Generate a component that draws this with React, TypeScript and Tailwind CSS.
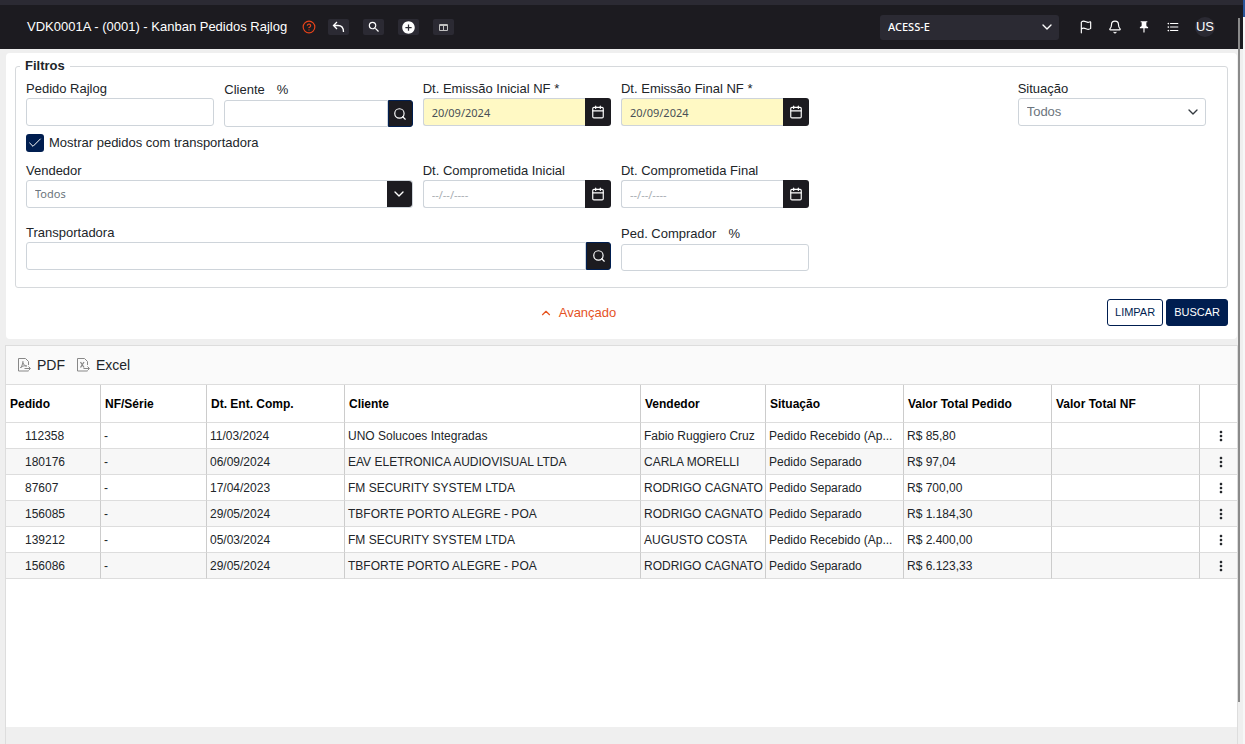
import type { ReactNode } from "react";
import { Bell, Calendar, Check, ChevronDown, ChevronUp, CircleHelp, Flag, Search } from "lucide-react";
import { MdAddCircle, MdFormatListBulleted, MdMoreVert, MdPushPin, MdSearch } from "react-icons/md";

const orders = [
  { pedido: "112358", nf: "-", data: "11/03/2024", cliente: "UNO Solucoes Integradas", vendedor: "Fabio Ruggiero Cruz", situacao: "Pedido Recebido (Ap...", total: "R$ 85,80" },
  { pedido: "180176", nf: "-", data: "06/09/2024", cliente: "EAV ELETRONICA AUDIOVISUAL LTDA", vendedor: "CARLA MORELLI", situacao: "Pedido Separado", total: "R$ 97,04" },
  { pedido: "87607", nf: "-", data: "17/04/2023", cliente: "FM SECURITY SYSTEM LTDA", vendedor: "RODRIGO CAGNATO", situacao: "Pedido Separado", total: "R$ 700,00" },
  { pedido: "156085", nf: "-", data: "29/05/2024", cliente: "TBFORTE PORTO ALEGRE - POA", vendedor: "RODRIGO CAGNATO", situacao: "Pedido Separado", total: "R$ 1.184,30" },
  { pedido: "139212", nf: "-", data: "05/03/2024", cliente: "FM SECURITY SYSTEM LTDA", vendedor: "AUGUSTO COSTA", situacao: "Pedido Recebido (Ap...", total: "R$ 2.400,00" },
  { pedido: "156086", nf: "-", data: "29/05/2024", cliente: "TBFORTE PORTO ALEGRE - POA", vendedor: "RODRIGO CAGNATO", situacao: "Pedido Separado", total: "R$ 6.123,33" },
];

const columns = ["Pedido", "NF/Série", "Dt. Ent. Comp.", "Cliente", "Vendedor", "Situação", "Valor Total Pedido", "Valor Total NF"];

const inputClass = "w-full min-w-0 flex-1 border border-[#ced4da] bg-white px-2 text-xs text-[#495057] outline-none";

function Field({ id, label, percent, className, children }: { id: string; label: string; percent?: boolean; className?: string; children: ReactNode }) {
  return (
    <div className={className}>
      <label htmlFor={id} className={percent ? "flex h-5 items-center gap-3" : "flex h-[18px] items-center"}>
        {label}
        {percent && <span>%</span>}
      </label>
      {children}
    </div>
  );
}

function DateField({ id, label, value }: { id: string; label: string; value?: string }) {
  return (
    <Field id={id} label={label}>
      <div className="flex">
        <input
          id={id}
          defaultValue={value}
          placeholder="--/--/----"
          className={
            value
              ? "h-7 w-full min-w-0 flex-1 rounded-l-[3px] border border-r-0 border-[#ced4da] bg-[#fff9c4] px-2 font-['Noto_Sans',sans-serif] text-[11px] text-[#495057] outline-none"
              : "h-7 w-full min-w-0 flex-1 rounded-l-[3px] border border-r-0 border-[#ced4da] bg-white px-2 font-['Noto_Sans',sans-serif] text-[11px] text-[#495057] outline-none placeholder:text-[#a9aeb3]"
          }
        />
        <button aria-label="Abrir calendário" className="flex h-7 w-[26px] items-center justify-center rounded-r-[3px] bg-[#1c1b20] text-white">
          <Calendar size={14} strokeWidth={2} />
        </button>
      </div>
    </Field>
  );
}

function SearchField({ id, label, percent, className }: { id: string; label: string; percent?: boolean; className?: string }) {
  const height = percent ? "h-[27px]" : "h-7";
  return (
    <Field id={id} label={label} percent={percent} className={className}>
      <div className={`flex ${height}`}>
        <input id={id} className={`${inputClass} rounded-l-[3px]`} />
        <button aria-label="Pesquisar" className="flex w-[25px] items-center justify-center rounded-r-[3px] border border-[#001e50] bg-[#1c1b20] text-white">
          <Search size={14} strokeWidth={2} />
        </button>
      </div>
    </Field>
  );
}

function ToolButton({ label, children }: { label: string; children: ReactNode }) {
  return (
    <button aria-label={label} className="flex h-4 w-[21px] items-center justify-center rounded-[2px] bg-[#2b2a33] text-white">
      {children}
    </button>
  );
}

function FileIcon({ children }: { children: ReactNode }) {
  return (
    <svg width="14" height="14" viewBox="0 0 14 14" fill="none" stroke="#888" strokeWidth="1">
      <path d="M10.5 7V3.5L7.500.5H.5v12.5H10.5M6.500 10.5h5.500M10.500 8.500l2 2-2 2" />
      {children}
    </svg>
  );
}

function Header() {
  return (
    <header className="flex h-[49px] items-center border-t-[5px] border-[#2b2a33] bg-[#1c1b20] pr-7 pl-[27px] text-white">
      <h1 className="text-[13px]">VDK0001A - (0001) - Kanban Pedidos Rajlog</h1>
      <button aria-label="Ajuda" className="ml-[15px] text-[#e5431a]">
        <CircleHelp size={14} strokeWidth={2} />
      </button>
      <div className="ml-3 flex gap-[14px]">
        <ToolButton label="Voltar">
          <svg width="13" height="12" viewBox="0 0 13 12" fill="none" stroke="currentColor" strokeWidth="1.3">
            <path d="M5 1 1.500 4.500 5 8M1.500 4.500H6c3.500 0 5.500 2.500 5.500 6.500" />
          </svg>
        </ToolButton>
        <ToolButton label="Pesquisar">
          <MdSearch size={14} />
        </ToolButton>
        <ToolButton label="Adicionar">
          <MdAddCircle size={15} />
        </ToolButton>
        <ToolButton label="Colunas">
          <svg width="9" height="7" viewBox="0 0 9 7" fill="none" stroke="#c0c0c0" strokeWidth="1">
            <path d="M.5.5h8v6h-8zM.5 1.500h8M4.500 1v5.500" />
          </svg>
        </ToolButton>
      </div>
      <div className="relative ml-auto w-[179px]">
        <select aria-label="Empresa" className="h-[25px] w-full appearance-none rounded-[3px] bg-[#2b2a33] px-2 font-['Noto_Sans',sans-serif] text-[11px] font-medium outline-none">
          <option>ACESS-E</option>
        </select>
        <ChevronDown size={16} className="pointer-events-none absolute top-1 right-1" />
      </div>
      <div className="ml-5 flex items-center gap-[15px]">
        <button aria-label="Marcadores"><Flag size={14} strokeWidth={2} /></button>
        <button aria-label="Notificações"><Bell size={14} strokeWidth={2} /></button>
        <button aria-label="Fixar"><MdPushPin size={14} /></button>
        <button aria-label="Lista"><MdFormatListBulleted size={14} /></button>
        <button className="flex size-5 items-center justify-center rounded-full bg-[#2b2a33] text-[13px]">US</button>
      </div>
    </header>
  );
}

function Filters() {
  return (
    <section className="mx-[6px] mt-1 rounded-[4px] bg-white px-[9px] pt-[3px] pb-[13px]">
      <fieldset className="rounded-[3px] border border-[#d6d9dc]">
        <legend className="ml-1 px-[5px] text-[13px] leading-5 font-bold">Filtros</legend>
        <div className="pt-1 pr-[21px] pb-4 pl-[10px]">
          <div className="grid grid-cols-6 gap-x-[10px]">
            <Field id="pedido" label="Pedido Rajlog">
              <input id="pedido" className={`${inputClass} block h-7 rounded-[3px]`} />
            </Field>
            <SearchField id="cliente" label="Cliente" percent />
            <DateField id="emissao-inicial" label="Dt. Emissão Inicial NF *" value="20/09/2024" />
            <DateField id="emissao-final" label="Dt. Emissão Final NF *" value="20/09/2024" />
            <Field id="situacao" label="Situação" className="col-start-6">
              <div className="relative">
                <select id="situacao" className="h-7 w-full appearance-none rounded-[3px] border border-[#ced4da] bg-white px-2 text-[13px] text-[#6c757d] outline-none">
                  <option>Todos</option>
                </select>
                <ChevronDown size={16} className="pointer-events-none absolute top-[6px] right-[5px] text-[#343a40]" />
              </div>
            </Field>
          </div>
          <div className="mt-[7px] flex items-center gap-[5px] leading-[18px]">
            <div className="relative size-[18px]">
              <input id="transp" type="checkbox" defaultChecked className="block size-[18px] appearance-none rounded-[3px] bg-[#001e50]" />
              <Check size={16} strokeWidth={1.5} className="pointer-events-none absolute top-px left-px text-white" />
            </div>
            <label htmlFor="transp">Mostrar pedidos com transportadora</label>
          </div>
          <div className="mt-[10px] grid grid-cols-6 gap-x-[10px]">
            <Field id="vendedor" label="Vendedor" className="col-span-2">
              <div className="relative">
                <select id="vendedor" className="h-7 w-full appearance-none rounded-[3px] border border-[#ced4da] bg-white px-2 font-['Noto_Sans',sans-serif] text-[11px] text-[#6c757d] outline-none">
                  <option>Todos</option>
                </select>
                <span className="pointer-events-none absolute top-px right-px flex h-[26px] w-[25px] items-center justify-center rounded-r-[3px] bg-[#1c1b20] text-white">
                  <ChevronDown size={16} />
                </span>
              </div>
            </Field>
            <DateField id="comp-inicial" label="Dt. Comprometida Inicial" />
            <DateField id="comp-final" label="Dt. Comprometida Final" />
          </div>
          <div className="mt-4 grid grid-cols-6 gap-x-[10px]">
            <SearchField id="transportadora" label="Transportadora" className="col-span-3" />
            <Field id="comprador" label="Ped. Comprador" percent>
              <input id="comprador" className={`${inputClass} block h-[27px] rounded-[3px]`} />
            </Field>
          </div>
        </div>
      </fieldset>
      <div className="mt-[11px] flex items-center gap-[3px]">
        <div className="flex flex-1 justify-center pl-9">
          <button className="flex items-center gap-[6px] text-[13px] text-[#e5531f]">
            <ChevronUp size={14} strokeWidth={2} />
            Avançado
          </button>
        </div>
        <button className="h-[27px] rounded-[3px] border border-[#001e50] px-[7px] text-[11px] text-[#001e50]">LIMPAR</button>
        <button className="h-[27px] rounded-[3px] border border-[#001e50] bg-[#001e50] px-[7px] text-[11px] text-white">BUSCAR</button>
      </div>
    </section>
  );
}

function OrdersTable() {
  return (
    <section className="mx-[5px] mt-[6px] flex flex-1 flex-col border-x border-t border-[#ddd] bg-white">
      <div className="flex h-[38px] items-center gap-3 bg-[#fafafa] pl-3 text-sm">
        <button className="flex items-center gap-[5px]">
          <FileIcon>
            <path d="M2.500 10c1-1 2.500-4.500 2.500-7M5 4.500c.5 2.500 2 3.500 4 3.500M2.500 10c1-2 3.500-2.500 6-2" />
          </FileIcon>
          PDF
        </button>
        <button className="flex items-center gap-[5px]">
          <FileIcon>
            <path d="m3.500 4 3.500 5.500M7 4 3.500 9.500" strokeWidth="1.300" />
          </FileIcon>
          Excel
        </button>
      </div>
      <table className="w-full table-fixed border-separate border-spacing-0 border-t border-[#ddd] text-left text-xs">
        <colgroup>
          <col className="w-[95px]" />
          <col className="w-[106px]" />
          <col className="w-[138px]" />
          <col />
          <col className="w-[125px]" />
          <col className="w-[138px]" />
          <col className="w-[148px]" />
          <col className="w-[148px]" />
          <col className="w-[37px]" />
        </colgroup>
        <thead>
          <tr className="h-[38px] text-black">
            {columns.map((column) => (
              <th key={column} className="border-r border-b border-r-[#ccc] border-b-[#ddd] px-1 font-bold">
                {column}
              </th>
            ))}
            <th aria-label="Ações" className="border-b border-[#ddd]" />
          </tr>
        </thead>
        <tbody>
          {orders.map((order) => (
            <tr key={order.pedido} className="h-[26px] even:bg-[#f7f7f7] [&>td]:border-b [&>td]:border-b-[#ddd] [&>td]:pl-[3px] [&>td]:whitespace-nowrap [&>td:not(:last-child)]:border-r [&>td:not(:last-child)]:border-r-[#ccc]">
              <td>
                <span className="pl-4">{order.pedido}</span>
              </td>
              <td>{order.nf}</td>
              <td>{order.data}</td>
              <td>{order.cliente}</td>
              <td>{order.vendedor}</td>
              <td>{order.situacao}</td>
              <td>{order.total}</td>
              <td />
              <td>
                <button aria-label="Mais opções" className="ml-[10px] block">
                  <MdMoreVert size={16} />
                </button>
              </td>
            </tr>
          ))}
        </tbody>
      </table>
      <div className="mt-auto h-[17px] bg-[#efefef]" />
    </section>
  );
}

export default function App() {
  return (
    <div className="relative flex min-h-screen bg-[#efefef] font-['Liberation_Sans',Arial,sans-serif] text-[13px] text-[#212529]">
      <div className="flex min-w-0 flex-1 flex-col">
        <Header />
        <main className="flex flex-1 flex-col">
          <Filters />
          <OrdersTable />
        </main>
      </div>
      <div className="w-[2px] bg-[#f7f7f7]">
        <div className="h-[17px] bg-[#2b579a]" />
      </div>
      <div className="absolute top-[18px] right-[5px] bottom-[42px] w-[2px] bg-[#8a8a8a]" />
    </div>
  );
}
